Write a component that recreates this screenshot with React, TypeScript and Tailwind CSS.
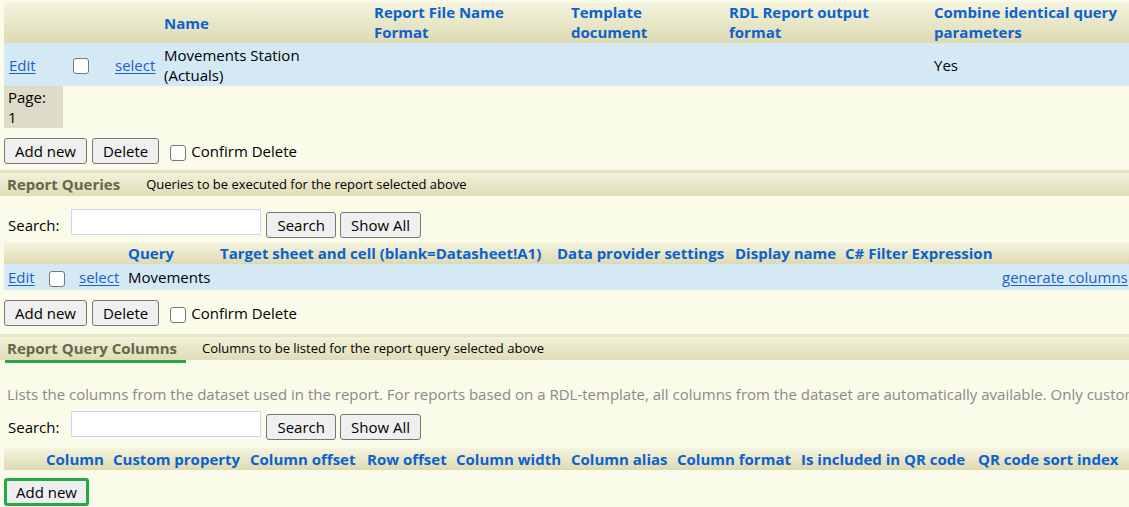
import React from "react";

const font = { fontFamily: '"Open Sans", "Noto Sans", sans-serif' };

function Box() {
  return <span className="inline-block h-[16px] w-[16px] rounded-[3px] border border-[#767676] bg-white align-middle" />;
}

function Btn({ label, green }: { label: string; green?: boolean }) {
  return (
    <button
      type="button"
      className={
        "rounded-[3px] bg-[#efefef] text-[15px] text-black " +
        (green
          ? "h-[28px] border-[3px] border-[#28a745] px-[9px] leading-[22px]"
          : "h-[26px] border border-[#767676] px-[10px] leading-[24px]")
      }
    >
      {label}
    </button>
  );
}

function Link({ children }: { children: React.ReactNode }) {
  return <a className="cursor-pointer text-[#1a5fd0] underline underline-offset-2">{children}</a>;
}

function SectionBand({ title, desc, marked }: { title: string; desc: string; marked?: boolean }) {
  return (
    <div className="border-t-[3px] border-[#e6e4c6]">
      <div className="flex h-[23px] items-center bg-gradient-to-b from-[#f3f2da] to-[#dfdcb6] pl-[7px]">
        <span className={"text-[15px] font-bold text-[#66664a] " + (marked ? "relative" : "")}>
          {title}
          {marked && <span className="absolute -bottom-[3px] -left-[2px] h-[3px] w-[181px] bg-[#28a745]" />}
        </span>
        <span className={"text-[13px] text-black " + (marked ? "ml-[25px]" : "ml-[26px]")}>{desc}</span>
      </div>
    </div>
  );
}

function SearchRow() {
  return (
    <div className="flex items-start pl-[8px]">
      <span className="mt-[5px] text-[15px]">Search:</span>
      <input className="ml-[12px] h-[26px] w-[190px] border border-[#c6d8f2] bg-white" />
      <div className="ml-[5px] mt-[3px] flex gap-[4px]">
        <Btn label="Search" />
        <Btn label="Show All" />
      </div>
    </div>
  );
}

const headGrad = "bg-gradient-to-b from-[#f5f4df] to-[#dddab2]";
const hText = "text-[15px] font-bold text-[#0b62cf]";

export default function App() {
  return (
    <div style={font} className="min-h-[507px] w-[1129px] overflow-hidden bg-[#fbfbea] text-[15px] text-black">
      {/* Reports table */}
      <div className="ml-[4px] pt-[2px]">
        <div className={"flex h-[41px] leading-[20px] " + headGrad + " " + hText}>
          <div className="w-[156px]" />
          <div className="w-[210px] self-center pl-[4px]">Name</div>
          <div className="w-[197px] pl-[4px]">Report File Name<br />Format</div>
          <div className="w-[158px] pl-[4px]">Template<br />document</div>
          <div className="w-[205px] pl-[4px]">RDL Report output<br />format</div>
          <div className="flex-1 whitespace-nowrap pl-[4px]">Combine identical query<br />parameters</div>
        </div>
        <div className="flex h-[43px] items-center bg-[#d5e9f5] leading-[20px]">
          <div className="w-[60px] pl-[5px]"><Link>Edit</Link></div>
          <div className="w-[46px] pl-[9px]"><Box /></div>
          <div className="w-[50px] pl-[5px]"><Link>select</Link></div>
          <div className="w-[210px] pl-[4px]">Movements Station<br />(Actuals)</div>
          <div className="w-[560px]" />
          <div className="flex-1 pl-[4px]">Yes</div>
        </div>
        <div className="h-[42px] w-[59px] bg-[#dedcc8] pl-[4px] pt-[1px] leading-[20px]">Page:<br />1</div>
        <div className="mt-[10px] flex items-center">
          <Btn label="Add new" />
          <div className="ml-[5px]"><Btn label="Delete" /></div>
          <div className="ml-[11px]"><Box /></div>
          <span className="ml-[5px]">Confirm Delete</span>
        </div>
      </div>

      <div className="mt-[6px]">
        <SectionBand title="Report Queries" desc="Queries to be executed for the report selected above" />
      </div>

      {/* Queries */}
      <div className="mt-[13px]"><SearchRow /></div>
      <div className="ml-[4px] mt-[4px]">
        <div className={"flex h-[22px] items-center whitespace-nowrap " + headGrad + " " + hText}>
          <div className="w-[120px]" />
          <div className="w-[92px] pl-[4px]">Query</div>
          <div className="w-[337px] pl-[4px]">Target sheet and cell (blank=Datasheet!A1)</div>
          <div className="w-[178px] pl-[4px]">Data provider settings</div>
          <div className="w-[110px] pl-[4px]">Display name</div>
          <div className="flex-1 pl-[4px]">C# Filter Expression</div>
        </div>
        <div className="flex h-[26px] items-center whitespace-nowrap bg-[#d5e9f5]">
          <div className="w-[41px] pl-[4px]"><Link>Edit</Link></div>
          <div className="w-[30px] pl-[4px]"><Box /></div>
          <div className="w-[49px] pl-[4px]"><Link>select</Link></div>
          <div className="flex-1 pl-[4px]">Movements</div>
          <div className="w-[127px]"><Link>generate columns</Link></div>
        </div>
        <div className="mt-[10px] flex items-center">
          <Btn label="Add new" />
          <div className="ml-[5px]"><Btn label="Delete" /></div>
          <div className="ml-[11px]"><Box /></div>
          <span className="ml-[5px]">Confirm Delete</span>
        </div>
      </div>

      <div className="mt-[8px]">
        <SectionBand marked title="Report Query Columns" desc="Columns to be listed for the report query selected above" />
      </div>

      {/* Columns */}
      <p className="mt-[24px] whitespace-nowrap pl-[7px] leading-[20px] text-[#8a8a8a]">
        Lists the columns from the dataset used in the report. For reports based on a RDL-template, all columns from the dataset are automatically available. Only custom columns need to be listed here.
      </p>
      <div className="mt-[7px]"><SearchRow /></div>
      <div className="ml-[4px] mt-[8px]">
        <div className={"flex h-[22px] items-center whitespace-nowrap " + headGrad + " " + hText}>
          <div className="w-[38px]" />
          <div className="w-[67px] pl-[4px]">Column</div>
          <div className="w-[137px] pl-[4px]">Custom property</div>
          <div className="w-[117px] pl-[4px]">Column offset</div>
          <div className="w-[89px] pl-[4px]">Row offset</div>
          <div className="w-[115px] pl-[4px]">Column width</div>
          <div className="w-[106px] pl-[4px]">Column alias</div>
          <div className="w-[124px] pl-[4px]">Column format</div>
          <div className="w-[177px] pl-[4px]">Is included in QR code</div>
          <div className="flex-1 pl-[4px]">QR code sort index</div>
        </div>
        <div className="mt-[8px]">
          <Btn green label="Add new" />
        </div>
      </div>
    </div>
  );
}
